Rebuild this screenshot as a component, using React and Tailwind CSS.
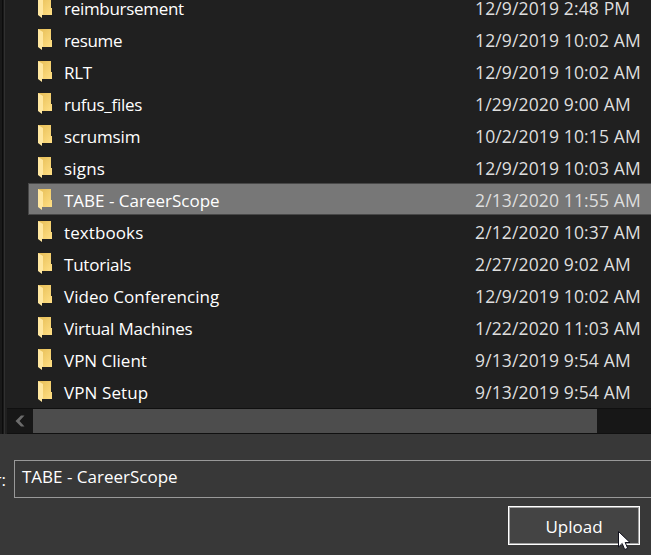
const files = [
  { name: 'reimbursement', date: '12/9/2019 2:48 PM', track: 'tracking-[-0.3px]' },
  { name: 'resume', date: '12/9/2019 10:02 AM', track: 'tracking-[-0.35px]' },
  { name: 'RLT', date: '12/9/2019 10:02 AM', track: 'tracking-[-0.3px]' },
  { name: 'rufus_files', date: '1/29/2020 9:00 AM', track: 'tracking-[-0.27px]' },
  { name: 'scrumsim', date: '10/2/2019 10:15 AM', track: 'tracking-[-0.15px]' },
  { name: 'signs', date: '12/9/2019 10:03 AM', track: 'tracking-[0.2px]' },
  { name: 'TABE - CareerScope', date: '2/13/2020 11:55 AM', track: 'tracking-[0px]', selected: true },
  { name: 'textbooks', date: '2/12/2020 10:37 AM', track: 'tracking-[0.1px]' },
  { name: 'Tutorials', date: '2/27/2020 9:02 AM', track: 'tracking-[-0.22px]' },
  { name: 'Video Conferencing', date: '12/9/2019 10:02 AM', track: 'tracking-[0.03px]' },
  { name: 'Virtual Machines', date: '1/22/2020 11:03 AM', track: 'tracking-[-0.2px]' },
  { name: 'VPN Client', date: '9/13/2019 9:54 AM', track: 'tracking-[0px]' },
  { name: 'VPN Setup', date: '9/13/2019 9:54 AM', track: 'tracking-[0.1px]' },
];

function FolderIcon() {
  return (
    <svg width="14" height="21" viewBox="0 0 14 21" className="shrink-0">
      <defs>
        <linearGradient id="back" x1="0" y1="0" x2="1" y2="1">
          <stop offset="0" stopColor="#e6bd55" />
          <stop offset="1" stopColor="#ffdf85" />
        </linearGradient>
      </defs>
      <path d="M0 0H13V11H14V18H4L0 18Z" fill="url(#back)" />
      <path d="M0 0L5 3V17.5L4 18V21L0 18Z" fill="#ffe7a0" />
    </svg>
  );
}

function FileRow({ file }) {
  return (
    <div
      className={
        'flex h-8 shrink-0 items-center border pl-[9px] ' +
        (file.selected ? 'border-[#484848] bg-[#777777]' : 'border-transparent')
      }
    >
      <div className="pt-px">
        <FolderIcon />
      </div>
      <span className={'ml-3 w-[411px] shrink-0 pt-[3px] whitespace-nowrap text-white ' + file.track}>{file.name}</span>
      <span className="pt-px text-[17.5px] tracking-[0.14px] whitespace-nowrap text-[#dedede]">{file.date}</span>
    </div>
  );
}

export default function App() {
  return (
    <div className="flex h-[555px] w-[651px] flex-col overflow-hidden bg-[#383838] font-['Open_Sans','Noto_Sans',sans-serif] text-[17px] leading-6 text-white">
      <div className="flex h-[434px] shrink-0 bg-[#202020]">
        <div className="w-[2px] shrink-0 bg-[#191919]" />
        <div className="w-px shrink-0 bg-[#0c0c0c]" />
        <div className="w-px shrink-0 bg-[#191919]" />
        <div className="w-px shrink-0 bg-[#303030]" />
        <div className="flex min-w-0 flex-1 flex-col overflow-hidden">
          <div className="h-[408px] shrink-0 overflow-hidden pl-[23px]">
            <div className="-mt-[9px] flex w-[630px] flex-col">
              {files.map((file) => (
                <FileRow key={file.name} file={file} />
              ))}
            </div>
          </div>
          <div className="ml-[2px] flex h-[26px] shrink-0 items-stretch border-y border-[#101010] bg-[#171717]">
            <div className="flex w-[26px] items-center justify-center">
              <svg width="10" height="12" viewBox="0 0 10 12">
                <path d="M6 0.5H9.5L4.5 6L9.5 11.5H6L0.5 6Z" fill="#6b6b6b" />
              </svg>
            </div>
            <div className="w-[564px] bg-[#4d4d4d]" />
          </div>
        </div>
      </div>
      <div className="mt-[26px] flex h-[38px] shrink-0">
        <div className="flex w-[14px] shrink-0 justify-end overflow-hidden pt-[8px] pr-[8px]">
          <span>r:</span>
        </div>
        <div className="w-[650px] shrink-0 border border-[#999999] pt-[4px] pl-[7px]">TABE - CareerScope</div>
      </div>
      <div className="mt-2 flex justify-end pr-[11px]">
        <button className="relative h-[39px] w-[132px] border border-white bg-[#444444]">
          <span className="flex h-full items-center justify-center border border-[#a0a0a0] pt-[2px]">Upload</span>
          <svg width="13" height="20" viewBox="0 0 13 20" className="absolute top-[24px] left-[109px]">
            <path d="M.5 .5V16L4.2 12.5L6.7 18.5L9.7 17.3L7.2 11.5H12Z" fill="#fff" stroke="#10101c" />
          </svg>
        </button>
      </div>
    </div>
  );
}
